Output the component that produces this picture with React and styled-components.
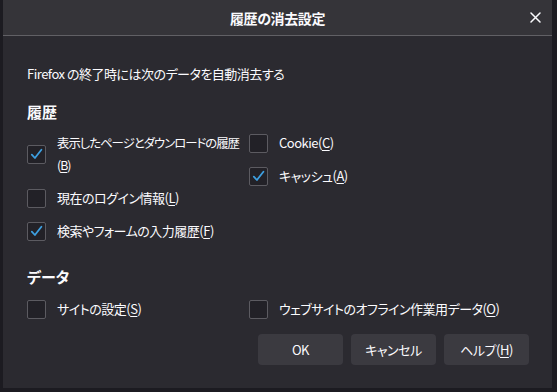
import React from "react";
import styled, { createGlobalStyle } from "styled-components";

const GlobalStyle = createGlobalStyle`
  html, body { margin: 0; padding: 0; background: #1c1b21; }
  body {
    font-family: "Noto Sans CJK JP", "Noto Sans", sans-serif;
    color: #fbfbfe;
    -webkit-font-smoothing: antialiased;
  }
`;

const Page = styled.div`
  width: 557px;
  height: 392px;
  box-sizing: border-box;
  padding: 0 5px 4px 3px;
  display: flex;
`;

const Dialog = styled.div`
  flex: 1;
  display: flex;
  flex-direction: column;
  background: #2b2a30;
`;

const TitleBar = styled.div`
  height: 35px;
  flex: none;
  display: grid;
  grid-template-columns: 1fr auto 1fr;
  align-items: center;
  background: #353439;
  border-bottom: 1px solid #616065;
`;

const Title = styled.div`
  grid-column: 2;
  font-size: 14px;
  font-weight: 700;
  font-feature-settings: "palt";
  letter-spacing: -0.4px;
  padding-top: 1px;
`;

const CloseButton = styled.div`
  grid-column: 3;
  justify-self: end;
  width: 34px;
  height: 34px;
  display: flex;
  align-items: center;
  justify-content: center;
`;

const Body = styled.div`
  flex: 1;
  display: flex;
  flex-direction: column;
  padding: 28px 23px 24px 24px;
  font-size: 13px;
  font-feature-settings: "palt";
  letter-spacing: -0.5px;
`;

const Description = styled.div`
  line-height: 20px;
`;

const Heading = styled.div`
  font-size: 15px;
  font-weight: 700;
  line-height: 22px;
  letter-spacing: 0;
  margin-top: ${(p) => p.$top}px;
`;

const Grid = styled.div`
  display: grid;
  grid-template-columns: 222px 1fr;
  margin-top: ${(p) => p.$top}px;
`;

const Column = styled.div`
  display: flex;
  flex-direction: column;
  gap: 11px;
`;

const Row = styled.label`
  display: flex;
  align-items: center;
  gap: 11px;
`;

const Box = styled.span`
  flex: none;
  width: 19px;
  height: 19px;
  box-sizing: border-box;
  border: 1px solid #5c5b61;
  border-radius: 2px;
  background: #222127;
  display: flex;
  align-items: center;
  justify-content: center;
`;

const LabelText = styled.span`
  line-height: 22px;
  white-space: ${(p) => (p.$tight ? "nowrap" : "normal")};
  font-size: ${(p) => (p.$tight ? "12.4px" : "inherit")};
  letter-spacing: ${(p) => (p.$tight ? "-1px" : "inherit")};
`;

const Key = styled.span`
  text-decoration: underline;
  text-underline-offset: 2px;
`;

const Buttons = styled.div`
  display: flex;
  justify-content: flex-end;
  gap: 8px;
  margin-top: 14px;
`;

const Button = styled.div`
  width: 85px;
  height: 31px;
  border-radius: 4px;
  background: #3b3a40;
  display: flex;
  align-items: center;
  justify-content: center;
  font-size: 13px;
`;

const Check = () => (
  <svg width="15" height="15" viewBox="0 0 15 15">
    <path
      d="M2.8 7.6 L5.9 11 L12.4 2.8"
      fill="none"
      stroke="#3d9fe0"
      strokeWidth="1.8"
      strokeLinecap="round"
      strokeLinejoin="round"
    />
  </svg>
);

const Checkbox = ({ checked }) => <Box>{checked ? <Check /> : null}</Box>;

const Option = ({ checked, children, tight }) => (
  <Row>
    <Checkbox checked={checked} />
    <LabelText $tight={tight}>{children}</LabelText>
  </Row>
);

export default function App() {
  return (
    <>
      <GlobalStyle />
      <Page>
        <Dialog>
          <TitleBar>
            <Title>履歴の消去設定</Title>
            <CloseButton>
              <svg width="11" height="11" viewBox="0 0 11 11">
                <path
                  d="M1 1 L10 10 M10 1 L1 10"
                  stroke="#fbfbfe"
                  strokeWidth="1.5"
                  strokeLinecap="round"
                />
              </svg>
            </CloseButton>
          </TitleBar>
          <Body>
            <Description>Firefox の終了時には次のデータを自動消去する</Description>
            <Heading $top={17}>履歴</Heading>
            <Grid $top={9}>
              <Column>
                <Option checked tight>
                  表示したページとダウンロードの履歴
                  <br />(<Key>B</Key>)
                </Option>
                <Option>
                  現在のログイン情報(<Key>L</Key>)
                </Option>
                <Option checked>
                  検索やフォームの入力履歴(<Key>F</Key>)
                </Option>
              </Column>
              <Column>
                <Option>
                  Cookie(<Key>C</Key>)
                </Option>
                <Option checked>
                  キャッシュ(<Key>A</Key>)
                </Option>
              </Column>
            </Grid>
            <Heading $top={24}>データ</Heading>
            <Grid $top={10}>
              <Column>
                <Option>
                  サイトの設定(<Key>S</Key>)
                </Option>
              </Column>
              <Column>
                <Option>
                  ウェブサイトのオフライン作業用データ(<Key>O</Key>)
                </Option>
              </Column>
            </Grid>
            <Buttons>
              <Button>OK</Button>
              <Button>キャンセル</Button>
              <Button>
                ヘルプ(<Key>H</Key>)
              </Button>
            </Buttons>
          </Body>
        </Dialog>
      </Page>
    </>
  );
}
